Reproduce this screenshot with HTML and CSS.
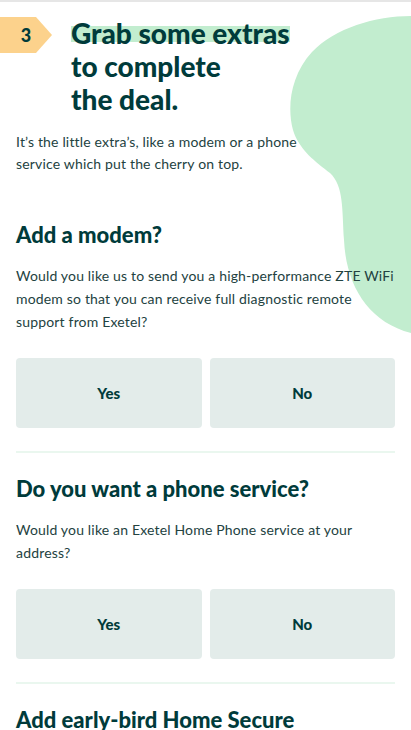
FILE: index.html
```html
<!DOCTYPE html>
<html lang="en">
<head>
<meta charset="utf-8">
<title>Grab some extras</title>
<link rel="stylesheet" href="styles.css">
</head>
<body>
<div class="page">
  <svg class="blob" width="130" height="340" viewBox="281 0 130 340" aria-hidden="true">
    <path d="M411,16 C375,16 335,28 312,52 C290,76 287,108 293,130 C299,150 316,162 330,173 C344,186 342,210 344,240 C346,285 368,322 411,333 Z" fill="#c2edcf"/>
  </svg>
  <header class="intro">
    <div class="step">
      <div class="badge"><span>3</span></div>
      <h1 class="title"><span class="hl">Grab some extras</span><br>to complete<br>the deal.</h1>
    </div>
    <p class="lead">It’s the little extra’s, like a modem or a phone<br>service which put the cherry on top.</p>
  </header>

  <section class="question">
    <h2>Add a modem?</h2>
    <p>Would you like us to send you a high-performance ZTE WiFi modem so that you can receive full diagnostic remote support from Exetel?</p>
    <div class="choices">
      <button class="choice">Yes</button>
      <button class="choice">No</button>
    </div>
  </section>

  <section class="question">
    <h2>Do you want a phone service?</h2>
    <p>Would you like an Exetel Home Phone service at your address?</p>
    <div class="choices">
      <button class="choice">Yes</button>
      <button class="choice">No</button>
    </div>
  </section>

  <section class="question">
    <h2>Add early-bird Home Secure</h2>
  </section>
</div>
</body>
</html>
```
FILE: styles.css
```css
* { box-sizing: border-box; }
html, body { margin: 0; padding: 0; background: #fff; }
body {
  font-family: Lato, "Noto Sans", sans-serif;
  color: #0a3c3c;
  overflow: hidden;
}
.page {
  position: relative;
  border-top: 2px solid #e6e6e6;
  padding: 0 16px;
  min-height: 728px;
}
.blob {
  position: absolute;
  right: 0;
  top: -2px;
  z-index: 0;
}
.intro, .question { position: relative; z-index: 1; }
.step {
  display: flex;
  align-items: flex-start;
  margin-left: -16px;
  padding-top: 14px;
}
.badge {
  width: 52px;
  height: 36px;
  margin-top: 1px;
  background: #fcd28c;
  clip-path: polygon(0 0, 36px 0, 52px 50%, 36px 100%, 0 100%);
  display: flex;
  align-items: center;
  justify-content: center;
  font-weight: 900;
  font-size: 18px;
  color: #003b3b;
}
.title {
  margin: 1px 0 0 19px;
  font-size: 28px;
  line-height: 33px;
  font-weight: 900;
  color: #003b3b;
}
.hl {
  background: linear-gradient(to bottom, transparent 0 10px, #c2edcf 10px 26px, transparent 26px);
}
.lead {
  margin: 15px 0 0;
  font-size: 14px;
  line-height: 22px;
  letter-spacing: 0.17px;
  color: #23423f;
}
.question {
  padding-bottom: 23px;
  border-bottom: 2px solid #eaf7ef;
}
.intro + .question { margin-top: 47px; }
.question + .question { padding-top: 23px; }
.question h2 {
  margin: 0;
  font-size: 22px;
  line-height: 26px;
  font-weight: 900;
  color: #003b3b;
}
.question p {
  margin: 16px 0 0;
  font-size: 14px;
  line-height: 23px;
  letter-spacing: 0.17px;
  color: #23423f;
}
.choices {
  display: grid;
  grid-template-columns: 1fr 1fr;
  gap: 8px;
  margin-top: 25px;
}
.choice {
  height: 70px;
  border: 0;
  border-radius: 4px;
  background: #e3ecea;
  font-family: inherit;
  font-size: 15px;
  font-weight: 900;
  color: #003b3b;
}
.question:last-child { border-bottom: 0; }
```
